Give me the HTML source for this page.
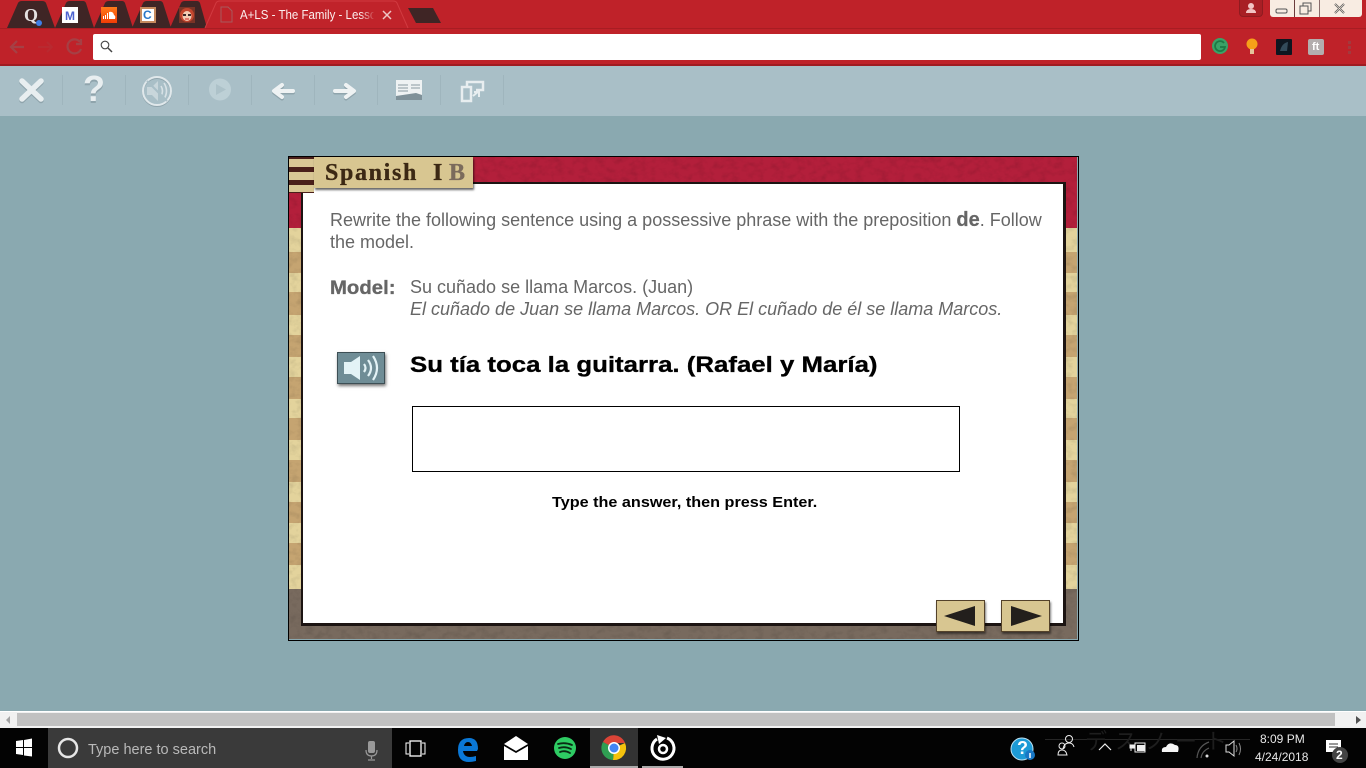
<!DOCTYPE html>
<html lang="en">
<head>
<meta charset="utf-8">
<title>A+LS - The Family</title>
<style>
html,body{margin:0;padding:0;width:1366px;height:768px;overflow:hidden;background:#8aa9b0;font-family:"Liberation Sans",Arial,sans-serif}
.a{position:absolute}
.t{position:absolute;white-space:nowrap}
.w{transform-origin:0 50%}
svg{position:absolute;overflow:visible}
.sep{position:absolute;top:75px;width:1px;height:30px;background:#9fb5bd}
</style>
</head>
<body>
<!-- chrome -->
<div class="a" style="left:0;top:0;width:1366px;height:65px;background:#bf2229"></div>
<div class="a" style="left:0;top:28px;width:1366px;height:1px;background:#a81d23"></div>
<div class="a" style="left:0;top:64px;width:1366px;height:2px;background:#a01b21"></div>

<svg style="left:0;top:0" width="460" height="30">
  <path d="M7 28 L18 3 Q19 1 22 1 L42 1 Q45 1 46 3 L55 28Z M55 28 L66 3 Q67 1 70 1 L83 1 Q85 1 86 3 L94 28Z M94 28 L105 3 Q106 1 109 1 L122 1 Q124 1 125 3 L133 28Z M132 28 L143 3 Q144 1 147 1 L160 1 Q162 1 163 3 L171 28Z M170 28 L181 3 Q182 1 185 1 L197 1 Q199 1 200 3 L207 28Z" fill="#3f2525"/>
  <path d="M205 28 L216 3 Q217 1 220 1 L393 1 Q396 1 397 3 L408 28" fill="#c0232a" stroke="#d13a40" stroke-width="1"/>
  <path d="M408 8 L433 8 L441 23 L416 23Z" fill="#3f2525"/>
  <path d="M221 7 h7 l4 4 v11 h-11z" fill="none" stroke="#a85a5c"/>
  <path d="M383 11 l8 8 M391 11 l-8 8" stroke="#eec5c6" stroke-width="1.5"/>
</svg>
<div class="t" style="left:24px;top:5px;font:bold 18px 'Liberation Serif',serif;color:#e5e1e1">Q</div>
<div class="a" style="left:36px;top:20px;width:6px;height:6px;border-radius:50%;background:#3f7fe8"></div>
<div class="a" style="left:62px;top:7px;width:16px;height:16px;background:#fff"></div>
<div class="t" style="left:65px;top:9px;font:bold 12px 'Liberation Sans',sans-serif;color:#4c62d0">M</div>
<div class="a" style="left:101px;top:7px;width:16px;height:16px;background:linear-gradient(#ff7a1a,#f23c06)"></div>
<svg style="left:101px;top:7px" width="16" height="16"><path d="M2 12 V9 h1 v3z M4 12 V8 h1 v4z M6 12 V6 h1 v6z M8 12 V5 Q12 4 13 8 Q15 9 14 12z" fill="#fff"/></svg>
<div class="a" style="left:140px;top:7px;width:16px;height:16px;background:#c68a5e"></div>
<div class="a" style="left:142px;top:9px;width:12px;height:12px;background:#fff"></div>
<div class="t" style="left:143px;top:8px;font:bold 12px 'Liberation Sans',sans-serif;color:#2a78c8">C</div>
<svg style="left:179px;top:7px" width="16" height="16"><rect width="16" height="16" fill="#7a3326"/><circle cx="8" cy="8" r="7" fill="#c4452d"/><ellipse cx="8" cy="9" rx="4.5" ry="5" fill="#f3cdb5"/><rect x="4" y="7" width="3" height="2" fill="#3a2a2a"/><rect x="9" y="7" width="3" height="2" fill="#3a2a2a"/><path d="M6 12 h4" stroke="#c22" /></svg>
<div class="t w" style="left:240px;top:7px;width:145px;overflow:hidden;font-size:12.5px;line-height:16px;color:#fbeeee;transform:scaleX(.92)">A+LS - The Family - Lesson</div>
<div class="a" style="left:360px;top:6px;width:16px;height:18px;background:linear-gradient(90deg,rgba(192,35,42,0),#c0232a)"></div>

<!-- window buttons -->
<div class="a" style="left:1239px;top:0;width:24px;height:17px;background:#a81f25;border:1px solid #8f1b20;border-top:0;box-sizing:border-box;border-radius:0 0 4px 4px"></div>
<svg style="left:1240px;top:0" width="22" height="16"><circle cx="11" cy="6" r="3" fill="#f2c4c4"/><path d="M6 13 Q6 9 11 9 Q16 9 16 13Z" fill="#f2c4c4"/></svg>
<div class="a" style="left:1270px;top:0;width:92px;height:17px;background:#f8ece2;border-radius:0 0 3px 3px"></div>
<div class="a" style="left:1294px;top:0;width:1px;height:17px;background:#6b3b3b"></div>
<div class="a" style="left:1319px;top:0;width:1px;height:17px;background:#8a6b6b"></div>
<svg style="left:1270px;top:0" width="92" height="17">
  <rect x="6" y="9" width="11" height="4" rx="1.5" fill="#f8ece2" stroke="#555"/>
  <rect x="30" y="6" width="8" height="8" fill="none" stroke="#555"/><path d="M33 6 V3 h8 v8 h-3" fill="none" stroke="#555"/>
  <path d="M65 4 l9 9 M74 4 l-9 9" stroke="#555" stroke-width="2"/><path d="M65 4 l9 9 M74 4 l-9 9" stroke="#f8ece2" stroke-width=".6"/>
</svg>

<!-- nav -->
<svg style="left:0;top:29px" width="90" height="35">
  <path d="M24 18 H11 M17 12 l-6 6 6 6" fill="none" stroke="#a54045" stroke-width="2.2"/>
  <path d="M38 18 H52 M47 13 l5 5 -5 5" fill="none" stroke="#b92a30" stroke-width="2"/>
  <path d="M80 13 A7 7 0 1 0 81 20 M81 10 v5 h-5" fill="none" stroke="#a54045" stroke-width="2.2"/>
</svg>
<div class="a" style="left:93px;top:34px;width:1108px;height:26px;background:#fff;border-radius:2px"></div>
<svg style="left:100px;top:40px" width="14" height="14"><circle cx="5" cy="5" r="3.8" fill="none" stroke="#444" stroke-width="1.1"/><path d="M8 8 l4 4" stroke="#444" stroke-width="1.5"/></svg>

<svg style="left:1210px;top:37px" width="120" height="20">
  <circle cx="10" cy="9" r="8" fill="#3aa267"/><path d="M14 6 A5 5 0 1 0 15 10 H10" fill="none" stroke="#1d7a44" stroke-width="1.8"/>
  <circle cx="42" cy="7" r="5.5" fill="#f6a019"/><rect x="40" y="12" width="4" height="5" fill="#e5c39a"/>
  <rect x="66" y="2" width="16" height="16" rx="1" fill="#0e1620"/><path d="M70 14 Q72 6 78 5 L77 14 Z" fill="#334a5a"/>
  <rect x="98" y="2" width="16" height="16" rx="2" fill="#b3aeae"/>
</svg>
<div class="t" style="left:1312px;top:41px;font:bold 11px 'Liberation Sans',sans-serif;color:#fff">ft</div>
<div class="a" style="left:1348px;top:41px;width:3px;height:3px;background:#a33a3e;box-shadow:0 5px 0 #a33a3e,0 10px 0 #a33a3e"></div>

<!-- toolbar -->
<div class="a" style="left:0;top:66px;width:1366px;height:50px;background:#a9bfc7"></div>
<div class="sep" style="left:62px"></div><div class="sep" style="left:125px"></div><div class="sep" style="left:188px"></div><div class="sep" style="left:251px"></div><div class="sep" style="left:314px"></div><div class="sep" style="left:377px"></div><div class="sep" style="left:440px"></div><div class="sep" style="left:503px"></div>
<svg style="left:0;top:66px" width="520" height="50">
  <path d="M22 15 L41 33 M41 15 L22 33" stroke="#8fa4ac" stroke-width="5.5" stroke-linecap="round" transform="translate(0 1.5)"/>
  <path d="M22 15 L41 33 M41 15 L22 33" stroke="#e8eef0" stroke-width="5.5" stroke-linecap="round"/>
  <circle cx="157" cy="25" r="14" fill="none" stroke="#8fa4ac" stroke-width="2" transform="translate(0 1)"/>
  <circle cx="157" cy="25" r="14" fill="none" stroke="#e0e8eb" stroke-width="2"/>
  <path d="M147 21 h5 l6 -6 v20 l-6 -6 h-5z" fill="#c8d6db"/>
  <path d="M161 20 q3 5 0 10 M164 17 q5 8 0 16" fill="none" stroke="#d8e2e6" stroke-width="1.6"/>
  <path d="M147 15 L167 35" stroke="#a9bfc7" stroke-width="2"/>
  <circle cx="220" cy="23.5" r="11" fill="#bdd0d6"/><path d="M216 18 L226 23.5 L216 29Z" fill="#adc2c9"/>
  <path d="M293 25 H276 M282 19 L274 25 L282 31" fill="none" stroke="#8fa4ac" stroke-width="4" stroke-linecap="round" stroke-linejoin="round" transform="translate(0 1.5)"/>
  <path d="M293 25 H276 M282 19 L274 25 L282 31" fill="none" stroke="#eef2f3" stroke-width="4" stroke-linecap="round" stroke-linejoin="round"/>
  <path d="M335 25 H352 M346 19 L354 25 L346 31" fill="none" stroke="#8fa4ac" stroke-width="4" stroke-linecap="round" stroke-linejoin="round" transform="translate(0 1.5)"/>
  <path d="M335 25 H352 M346 19 L354 25 L346 31" fill="none" stroke="#eef2f3" stroke-width="4" stroke-linecap="round" stroke-linejoin="round"/>
  <rect x="396" y="14" width="26" height="20" fill="#eef2f3"/>
  <path d="M396 34 L396 30 L416 27 L422 29 V34Z" fill="#7f9199"/>
  <path d="M398 19 h10 M398 22 h10 M398 25 h10 M411 19 h9 M411 22 h9" stroke="#8a9aa2" stroke-width="1"/>
  <path d="M467 21 V16 H483 V24 H476" fill="none" stroke="#e8eef0" stroke-width="2.5"/>
  <rect x="462" y="21" width="9" height="14" fill="none" stroke="#e8eef0" stroke-width="2.5"/>
  <path d="M473 30 L479 25 M474 26 h5 v5" fill="none" stroke="#e8eef0" stroke-width="2"/>
</svg>
<div class="t" style="left:83px;top:71px;font:bold 36px/40px 'Liberation Sans',sans-serif;color:#8fa4ac">?</div>
<div class="t" style="left:83px;top:69px;font:bold 36px/40px 'Liberation Sans',sans-serif;color:#e8eef0">?</div>

<!-- course frame -->
<div class="a" style="left:288px;top:156px;width:791px;height:485px;box-sizing:border-box;border:1px solid #000"></div>
<div class="a" style="left:289px;top:157px;width:788px;height:71px;background:#b31f3b"></div>
<div class="a" style="left:289px;top:228px;width:788px;height:361px;background:linear-gradient(#e3d39c 0,#e3d39c 24px,#c5a471 24px,#c5a471 45px,#e3d39c 45px,#e3d39c 64px,#c5a471 64px,#c5a471 87px,#e3d39c 87px,#e3d39c 107px,#c5a471 107px,#c5a471 129px,#e3d39c 129px,#e3d39c 149px,#c5a471 149px,#c5a471 171px,#e3d39c 171px,#e3d39c 190px,#c5a471 190px,#c5a471 212px,#e3d39c 212px,#e3d39c 232px,#c5a471 232px,#c5a471 254px,#e3d39c 254px,#e3d39c 274px,#c5a471 274px,#c5a471 295px,#e3d39c 295px,#e3d39c 315px,#c5a471 315px,#c5a471 337px,#e3d39c 337px,#e3d39c 361px)"></div>
<div class="a" style="left:289px;top:589px;width:788px;height:50px;background:#786a5e"></div>
<svg style="left:289px;top:157px" width="788" height="482">
  <filter id="n" x="0" y="0" width="100%" height="100%"><feTurbulence type="fractalNoise" baseFrequency=".12 .16" numOctaves="3" seed="4"/><feColorMatrix values="0 0 0 0 0  0 0 0 0 0  0 0 0 0 0  1.6 0 0 0 -.7"/></filter>
  <rect width="788" height="482" filter="url(#n)" opacity=".13"/>
</svg>
<!-- white panel -->
<div class="a" style="left:301px;top:182px;width:765px;height:444px;box-sizing:border-box;background:#fff;border:2px solid #1c1412;border-right-width:3px;border-bottom-width:3px"></div>

<!-- title tab -->
<div class="a" style="left:289px;top:157px;width:25px;height:36px;background:#4a1f1a"></div>
<div class="a" style="left:289px;top:159px;width:25px;height:8px;background:#d9c795"></div>
<div class="a" style="left:289px;top:172px;width:25px;height:8px;background:#d9c795"></div>
<div class="a" style="left:289px;top:185px;width:25px;height:7px;background:#d9c795"></div>
<div class="a" style="left:314px;top:157px;width:159px;height:31px;background:#d8c691;box-shadow:1px 2px 2px rgba(0,0,0,.6)"></div>
<div class="t" style="left:325px;top:159px;font:bold 24px/29px 'Liberation Serif',serif;letter-spacing:1.65px;color:#3c2914;-webkit-text-stroke:.35px #3c2914">Spanish</div>
<div class="t" style="left:433px;top:159px;font:bold 24px/29px 'Liberation Serif',serif;color:#3c2914;-webkit-text-stroke:.35px #3c2914">I</div>
<div class="t" style="left:449px;top:159px;font:bold 24px/29px 'Liberation Serif',serif;color:#7b6b5c;-webkit-text-stroke:.35px #7b6b5c">B</div>

<!-- content -->
<div class="t" style="left:330px;top:209px;font-size:18px;line-height:22px;color:#666">Rewrite the following sentence using a possessive phrase with the preposition <b style="font-size:20px;line-height:20px;-webkit-text-stroke:.2px #666">de</b>. Follow<br>the model.</div>
<div class="t w" style="left:330px;top:278px;font:bold 19px/22px 'Liberation Sans',sans-serif;color:#666;transform:scaleX(1.07);-webkit-text-stroke:.3px #666">Model:</div>
<div class="t" style="left:410px;top:276px;font-size:18px;line-height:22px;color:#666">Su cuñado se llama Marcos. (Juan)<br><i>El cuñado de Juan se llama Marcos. OR El cuñado de él se llama Marcos.</i></div>

<div class="a" style="left:337px;top:352px;width:48px;height:32px;box-sizing:border-box;background:#6f8d96;border:1px solid #3d4f55;box-shadow:1px 2px 3px rgba(0,0,0,.55)"></div>
<svg style="left:337px;top:352px" width="48" height="32">
  <path d="M7 10 h7 l9 -6 v24 l-9 -6 h-7z" fill="#e3f3f6"/>
  <path d="M27 12 q3 4 0 8 M31 8 q6 8 0 16 M36 4 q8 12 0 24" fill="none" stroke="#e3f3f6" stroke-width="2.2"/>
</svg>
<div class="t w" style="left:410px;top:351px;font:bold 22px/28px 'Liberation Sans',sans-serif;color:#000;transform:scaleX(1.173);-webkit-text-stroke:.3px #000">Su tía toca la guitarra. (Rafael y María)</div>

<div class="a" style="left:412px;top:406px;width:548px;height:66px;box-sizing:border-box;background:#fff;border:1px solid #000"></div>
<div class="t w" style="left:552px;top:494px;font:bold 15px/18px 'Liberation Sans',sans-serif;color:#000;transform:scaleX(1.08)">Type the answer, then press Enter.</div>

<!-- nav buttons -->
<div class="a" style="left:936px;top:600px;width:49px;height:32px;box-sizing:border-box;background:#d8c691;border:1px solid #54422a;box-shadow:1px 2px 2px rgba(0,0,0,.5)"></div>
<div class="a" style="left:1001px;top:600px;width:49px;height:32px;box-sizing:border-box;background:#d8c691;border:1px solid #54422a;box-shadow:1px 2px 2px rgba(0,0,0,.5)"></div>
<svg style="left:936px;top:600px" width="114" height="32">
  <path d="M8 16 L39 6 V26Z" fill="#231f1c"/>
  <path d="M75 6 L106 16 L75 26Z" fill="#231f1c"/>
</svg>

<!-- scrollbar -->
<div class="a" style="left:0;top:711px;width:1366px;height:17px;background:#f1f1f1;border-top:1px solid #fff;box-sizing:border-box"></div>
<div class="a" style="left:17px;top:713px;width:1318px;height:13px;background:#c1c1c1"></div>
<svg style="left:0;top:712px" width="1366" height="16"><path d="M10 4 L6 8 L10 12Z" fill="#a3a3a3"/><path d="M1356 4 L1361 8 L1356 12Z" fill="#505050"/></svg>

<!-- taskbar -->
<div class="a" style="left:0;top:728px;width:1366px;height:40px;background:#030303"></div>
<div class="a" style="left:1045px;top:739px;width:205px;height:1px;background:#262626"></div>
<div class="t" style="left:1085px;top:726px;font:22px/28px 'Noto Sans CJK JP',sans-serif;letter-spacing:8px;color:#1e1e1e">デスノート</div>
<div class="a" style="left:48px;top:728px;width:344px;height:40px;background:#3a3a3a"></div>
<svg style="left:0;top:728px" width="700" height="40">
  <path d="M16 13 L23 12 V19 H16Z M24 12 L32 10.5 V19 H24Z M16 20 H23 V27 L16 26Z M24 20 H32 V28.5 L24 27.5Z" fill="#fff"/>
  <circle cx="68" cy="20" r="9" fill="none" stroke="#e6e6e6" stroke-width="2.5"/>
  <rect x="368" y="13" width="7" height="12" rx="2" fill="#999"/><path d="M366 22 q0 6 5.5 6 q5.5 0 5.5 -6 M371.5 28 v3 M368 32 h7" fill="none" stroke="#999" stroke-width="1.2"/>
  <rect x="410" y="13" width="11" height="15" fill="none" stroke="#fff" stroke-width="1.3"/><path d="M409 15 h-3 v11 h3 M422 15 h3 v11 h-3" fill="none" stroke="#fff"/>
  <path d="M477 23 H463 Q464 29 470 29 Q473 29 476 28 V33 Q472 34 469 34 Q458 34 458 22 Q458 10 469 10 Q478 10 478 21Z M472 18 Q471 14 468 14 Q465 14 464 18Z" fill="#0a78d7"/>
  <path d="M504 16 L516 8 L528 16 L516 23Z" fill="#fff"/>
  <path d="M504 18 L516 25 L528 18 V32 H504Z" fill="#fff"/>
  <circle cx="565" cy="20" r="11" fill="#2ecc63"/>
  <path d="M558 16 Q565 14 572 17 M559 20 Q565 18 571 21 M560 24 Q565 22 570 25" fill="none" stroke="#0a2a14" stroke-width="1.8" stroke-linecap="round"/>
</svg>
<div class="a" style="left:590px;top:728px;width:48px;height:40px;background:#333"></div>
<div class="a" style="left:590px;top:766px;width:48px;height:2px;background:#aaa"></div>
<div class="a" style="left:642px;top:766px;width:41px;height:2px;background:#aaa"></div>
<svg style="left:600px;top:734px" width="28" height="28">
  <path d="M14 14 L3 8 A12 12 0 0 1 25 9 L14 9Z" fill="#db4437"/>
  <path d="M14 14 L25 9 A12 12 0 0 1 13 26Z" fill="#f4c20d"/>
  <path d="M14 14 L13 26 A12 12 0 0 1 3 8Z" fill="#2f9e52"/>
  <circle cx="14" cy="14" r="6" fill="#fff"/><circle cx="14" cy="14" r="4.5" fill="#4285f4"/>
</svg>
<svg style="left:650px;top:734px" width="26" height="28">
  <path d="M17 4 A11 11 0 1 1 7 5" fill="none" stroke="#fff" stroke-width="3"/>
  <path d="M7 1 L16 4 L9 10Z" fill="#fff"/>
  <circle cx="13" cy="15" r="4" fill="none" stroke="#fff" stroke-width="2.5"/>
</svg>
<div class="t" style="left:88px;top:741px;font-size:14.5px;line-height:18px;color:#b9b9b9">Type here to search</div>

<svg style="left:1000px;top:728px" width="366" height="40">
  <circle cx="22" cy="21" r="11" fill="#1d9bd6" stroke="#bfe3f3"/>
  <circle cx="30" cy="27" r="5" fill="#1877c5"/><path d="M30 25 v5" stroke="#fff" stroke-width="1.5"/>
  <circle cx="69" cy="11" r="3.5" fill="none" stroke="#eee"/><path d="M63 21 Q64 15 69 15 Q73 15 74 19" fill="none" stroke="#eee"/>
  <circle cx="62" cy="18" r="3" fill="none" stroke="#eee"/><path d="M58 27 Q58 22 62 22 Q66 22 67 27Z" fill="none" stroke="#eee"/>
  <path d="M99 22 L105 16 L111 22" fill="none" stroke="#eee" stroke-width="1.2"/>
  <rect x="135" y="15" width="10" height="9" fill="none" stroke="#eee"/><path d="M137 17 h8 v6 h-8z" fill="#eee"/>
  <path d="M130 17 h4 v3 h-4z M131 20 v3" fill="#eee" stroke="#eee"/>
  <path d="M162 24 Q161 19 166 19 Q169 13 175 17 Q180 17 178 24Z" fill="#f5f5f5"/>
  <path d="M197 30 Q198 18 209 14 M201 30 Q202 23 209 20" fill="none" stroke="#555" stroke-width="1.2"/><circle cx="207" cy="28" r="1.5" fill="#ddd"/>
  <path d="M226 17 h3 l5 -4 v15 l-5 -4 h-3z" fill="none" stroke="#ddd"/><path d="M236 17 q2 4 0 7 M239 15 q3 6 0 12" fill="none" stroke="#888"/>
  <path d="M326 12 h15 v12 h-3 l-1 3 -3 -3 h-8z" fill="#fff"/><path d="M329 16 h9 M329 19 h9" stroke="#333"/>
  <circle cx="340" cy="27" r="8" fill="#444"/>
</svg>
<div class="t" style="left:1336px;top:748px;font:bold 12px/14px 'Liberation Sans',sans-serif;color:#fff">2</div>
<div class="t" style="left:1017px;top:738px;font:bold 18px/20px 'Liberation Sans',sans-serif;color:#fff">?</div>
<div class="t" style="left:1260px;top:732px;font-size:12px;line-height:14px;color:#e8e8e8">8:09 PM</div>
<div class="t" style="left:1255px;top:750px;font-size:12px;line-height:14px;color:#e8e8e8">4/24/2018</div>
</body>
</html>
